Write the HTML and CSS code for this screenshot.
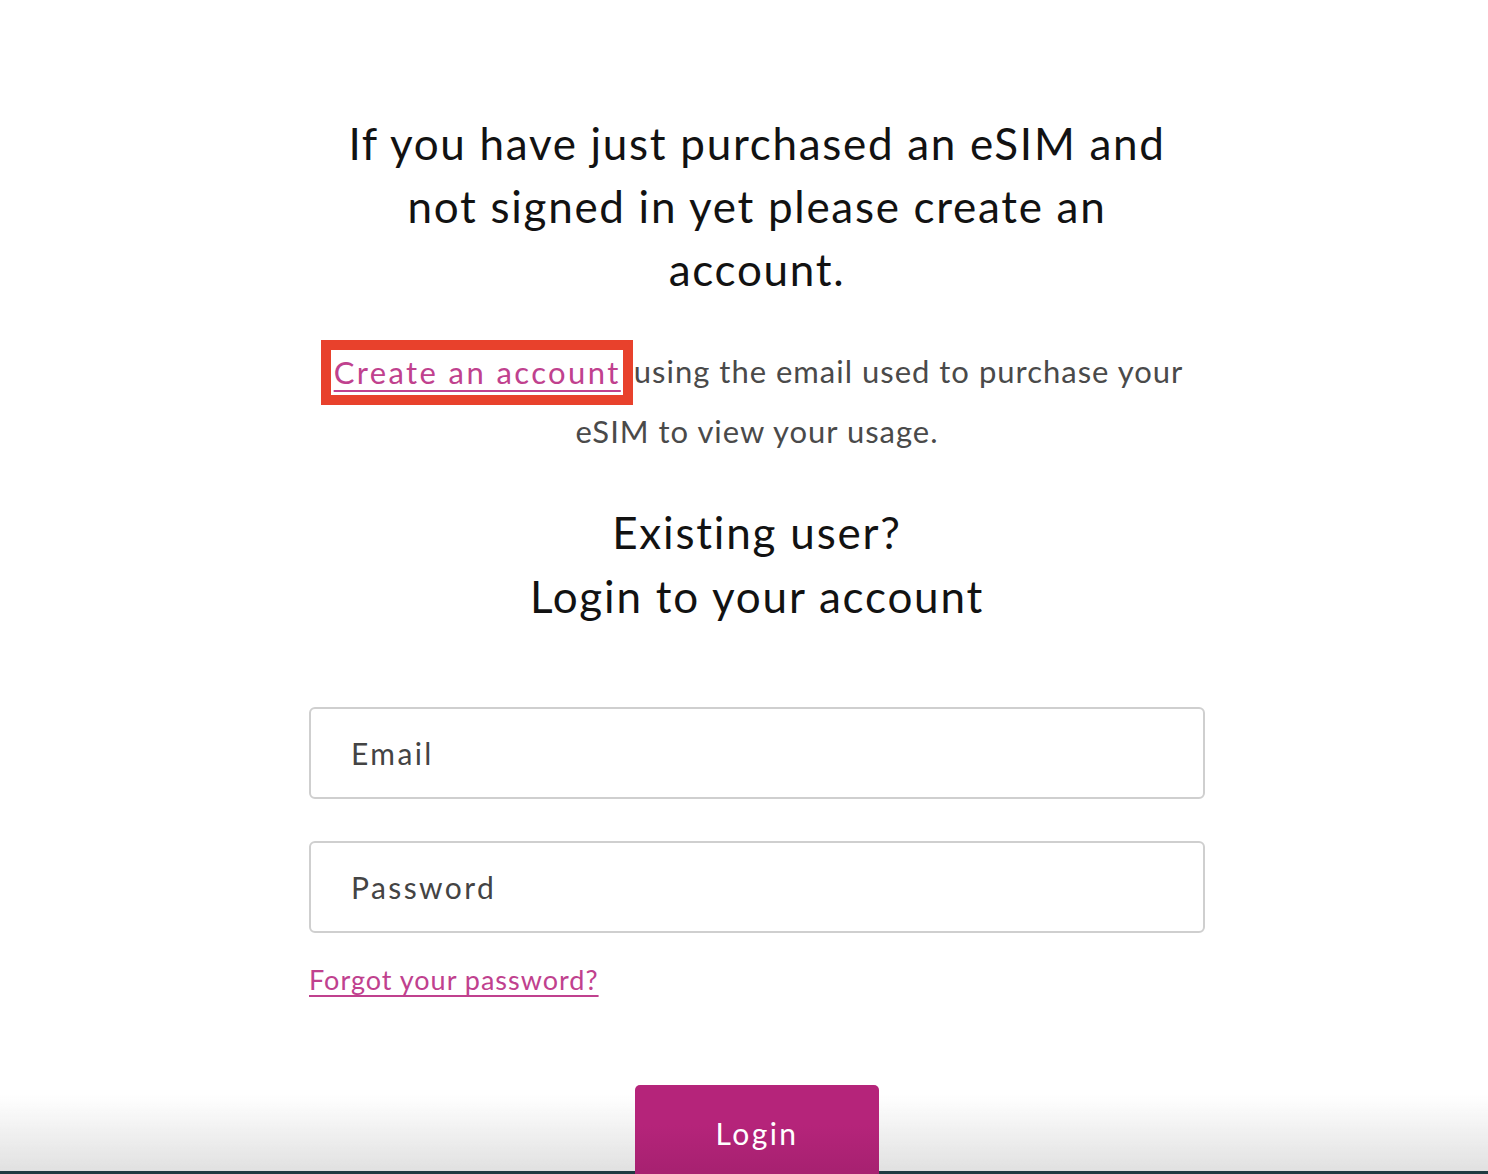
FILE: index.html
```html
<!DOCTYPE html>
<html lang="en">
<head>
<meta charset="utf-8">
<title>Login</title>
<link rel="stylesheet" href="styles.css">
</head>
<body>
<main class="page">
  <div class="content">
    <h1 class="intro">If you have just purchased an eSIM and not signed in yet please create an account.</h1>
    <p class="note"><span class="highlight"><a href="#" class="link">Create an account</a></span>using the email used to purchase your eSIM to view your usage.</p>
    <h2 class="login-title">Existing user?<br>Login to your account</h2>
    <form class="form">
      <input class="field" type="email" placeholder="Email">
      <input class="field" type="password" placeholder="Password">
      <a href="#" class="forgot">Forgot your password?</a>
      <div class="actions"><button type="button" class="btn">Login</button></div>
    </form>
  </div>
</main>
<div class="fade"></div>
</body>
</html>
```
FILE: styles.css
```css
html, body {
  margin: 0;
  padding: 0;
  background: #fff;
  height: 100%;
  overflow: hidden;
}
body {
  font-family: Lato, "Open Sans", sans-serif;
  color: #121212;
}
.page {
  display: flex;
  justify-content: center;
  padding-left: 26px;
}
.content {
  width: 896px;
  padding-top: 112px;
  text-align: center;
}
.intro {
  margin: 0 auto;
  width: 880px;
  font-size: 44px;
  line-height: 63px;
  font-weight: 400;
  letter-spacing: 1.7px;
}
.note {
  margin: 40px auto 0;
  width: 880px;
  font-size: 31px;
  line-height: 60px;
  letter-spacing: 1px;
  color: #4a4a4a;
}
.highlight {
  display: inline-block;
  outline: 10px solid #e8412c;
  padding: 0 2px 0 3px;
  margin: -6px 11px 0 0;
  line-height: 45px;
  vertical-align: middle;
}
.link {
  color: #c0418e;
  letter-spacing: 2.4px;
  text-decoration: underline;
  text-decoration-thickness: 2px;
  text-underline-offset: 6px;
}
.login-title {
  margin: 39px 0 0;
  font-size: 44px;
  line-height: 64px;
  font-weight: 400;
  letter-spacing: 1.8px;
}
.form {
  display: flex;
  flex-direction: column;
  align-items: stretch;
  margin-top: 79px;
}
.field {
  height: 92px;
  box-sizing: border-box;
  border: 2px solid #cfcfcf;
  border-radius: 6px;
  padding: 0 40px;
  font-family: inherit;
  font-size: 30px;
  letter-spacing: 2.4px;
  color: #444;
  margin-bottom: 42px;
  outline: none;
}
.field::placeholder {
  color: #444;
}
.forgot {
  align-self: flex-start;
  margin-top: -12px;
  font-size: 27px;
  letter-spacing: 1px;
  color: #c0418e;
  text-decoration: underline;
  text-decoration-thickness: 2px;
  text-underline-offset: 5px;
}
.actions {
  display: flex;
  justify-content: center;
  margin-top: 89px;
}
.btn {
  position: relative;
  z-index: 2;
  width: 244px;
  height: 100px;
  border: none;
  border-radius: 5px 5px 0 0;
  background: linear-gradient(#b5247a 40%, #a3206e);
  color: #fff;
  font-family: inherit;
  font-size: 30px;
  letter-spacing: 2.4px;
  padding: 0 0 4px 0;
}
.fade {
  position: fixed;
  z-index: 1;
  left: 0;
  right: 0;
  bottom: 0;
  height: 76px;
  background: linear-gradient(rgba(200,200,200,0), rgba(200,200,200,0.55));
  border-bottom: 3px solid #1f3b41;
  pointer-events: none;
}
```
